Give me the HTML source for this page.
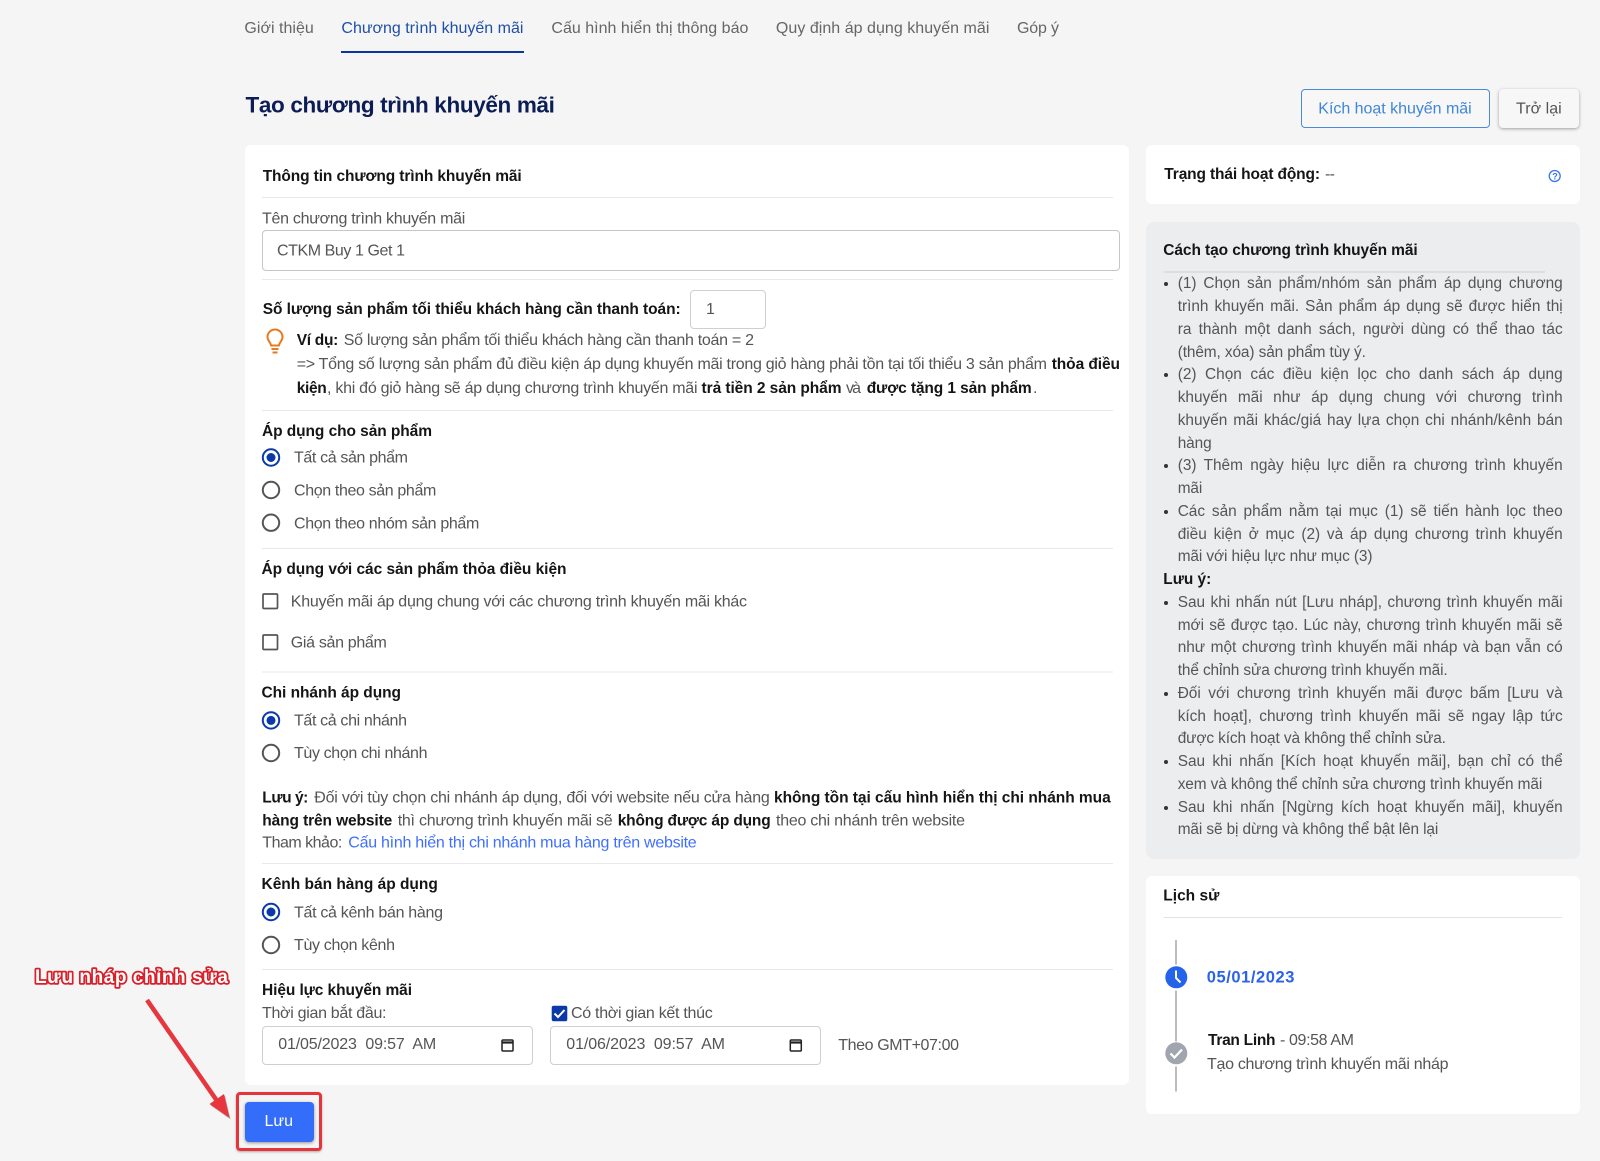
<!DOCTYPE html>
<html lang="vi"><head><meta charset="utf-8"><title>Tạo chương trình khuyến mãi</title>
<style>
html,body{margin:0;padding:0;width:1600px;height:1161px;overflow:hidden;background:#f5f5f5;font-family:"Liberation Sans",Arial,sans-serif}
.box{position:absolute;box-sizing:border-box}
.card{background:#fff;border-radius:6px}
svg{position:absolute;left:0;top:0}
text{font-family:"Liberation Sans",Arial,sans-serif;font-size:16px;fill:#555;white-space:pre}
.b{font-weight:bold;fill:#151515;font-size:15.5px}
.g{fill:#666}
#list{position:absolute;left:1177.7px;top:273.4px;width:385px;font-size:15.4px;line-height:22.75px;color:#555}
#list div{height:22.75px;text-align:justify;text-align-last:justify;position:relative;overflow:visible}
#list .p::before{content:"";position:absolute;left:-13.5px;top:9px;width:4px;height:4px;border-radius:50%;background:#333}
#list .h{margin-left:-14.4px;font-weight:bold;color:#151515;text-align-last:left}
#list .n{text-align:left;text-align-last:left;white-space:nowrap;letter-spacing:-.1px}
</style></head><body>
<div class="box card" style="left:244.5px;top:145px;width:884px;height:940px"></div>
<div class="box card" style="left:1146px;top:145px;width:434px;height:59px"></div>
<div class="box" style="left:1146px;top:222px;width:434px;height:637px;background:#ecedef;border-radius:8px"></div>
<div class="box card" style="left:1146px;top:876px;width:434px;height:238px"></div>
<div class="box" style="left:1300.5px;top:88.5px;width:189.5px;height:39.5px;border:1px solid #4a8ad8;border-radius:4px;background:#f7f7f7"></div>
<div class="box" style="left:1499px;top:89px;width:80px;height:39px;border-radius:4px;background:#f7f7f7;box-shadow:0 1px 3px rgba(0,0,0,.35)"></div>
<div class="box" style="left:262px;top:230px;width:858px;height:40.5px;border:1px solid #c6c6c6;border-radius:4px"></div>
<div class="box" style="left:690px;top:289.5px;width:75.5px;height:39px;border:1px solid #cfcfcf;border-radius:4px"></div>
<div class="box" style="left:262px;top:1025.5px;width:271px;height:39px;border:1px solid #cfcfcf;border-radius:4px"></div>
<div class="box" style="left:550px;top:1025.5px;width:271px;height:39px;border:1px solid #cfcfcf;border-radius:4px"></div>
<div class="box" style="left:245px;top:1102px;width:69px;height:40px;background:#356dfb;border-radius:4px;box-shadow:0 1px 3px rgba(0,0,0,.4)"></div>
<div class="box" style="left:235.5px;top:1091.500px;width:86.500px;height:59.500px;border:3px solid #e5343c;border-radius:4px;box-shadow:0 1px 2px rgba(0,0,0,.3)"></div>

<svg width="1600" height="1161" viewBox="0 0 1600 1161" xmlns="http://www.w3.org/2000/svg">
<!-- tabs -->
<text class="g" x="244.4" y="33" textLength="69.4">Giới thiệu</text>
<text x="341.4" y="33" textLength="182" style="fill:#1f4fa8">Chương trình khuyến mãi</text>
<text class="g" x="551.4" y="33" textLength="197">Cấu hình hiển thị thông báo</text>
<text class="g" x="775.9" y="33" textLength="213.5">Quy định áp dụng khuyến mãi</text>
<text class="g" x="1017" y="33" textLength="42">Góp ý</text>
<rect x="341" y="51" width="183" height="2" fill="#0b36a0"/>
<text x="245.5" y="112.3" textLength="309.4" style="font-size:22.500px;font-weight:bold;fill:#0c1c54">Tạo chương trình khuyến mãi</text>
<!-- buttons -->
<text x="1318.3" y="113.5" textLength="153.4" style="fill:#3f86d8">Kích hoạt khuyến mãi</text>
<text x="1516" y="113.5" textLength="45.7">Trở lại</text>
<!-- left card -->
<text class="b" x="262.7" y="181" textLength="259">Thông tin chương trình khuyến mãi</text>
<rect x="262" y="197" width="851" height="1" fill="#e8e8e8"/>
<text x="262" y="223.3" textLength="203.3">Tên chương trình khuyến mãi</text>
<text x="277" y="255.3" textLength="128">CTKM Buy 1 Get 1</text>
<rect x="262" y="279" width="851" height="1" fill="#e8e8e8"/>
<text class="b" x="262.7" y="314" textLength="418">Số lượng sản phẩm tối thiểu khách hàng cần thanh toán:</text>
<text x="706" y="314">1</text>
<path d="M271.5 349h7M272.5 352.5h5M271 345.5c0-3-3.5-4.5-3.5-8.5a7.5 7.5 0 0 1 15 0c0 4-3.5 5.500-3.500 8.500z" fill="none" stroke="#e8791e" stroke-width="2" stroke-linejoin="round"/>
<text class="b" x="296.7" y="345" textLength="41.6">Ví dụ:</text>
<text x="343.7" y="345" textLength="410.3">Số lượng sản phẩm tối thiểu khách hàng cần thanh toán = 2</text>
<text x="296.7" y="368.800" textLength="750.300">=&gt; Tổng số lượng sản phẩm đủ điều kiện áp dụng khuyến mãi trong giỏ hàng phải tồn tại tối thiểu 3 sản phẩm</text>
<text class="b" x="1051.7" y="368.800" textLength="68.300">thỏa điều</text>
<text class="b" x="296.7" y="393" textLength="30">kiện</text>
<text x="327" y="393" textLength="370.500">, khi đó giỏ hàng sẽ áp dụng chương trình khuyến mãi</text>
<text class="b" x="701.500" y="393" textLength="140">trả tiền 2 sản phẩm</text>
<text x="846" y="393" textLength="15">và</text>
<text class="b" x="866.700" y="393" textLength="165">được tặng 1 sản phẩm</text>
<text x="1033" y="393">.</text>
<rect x="262" y="410" width="851" height="1" fill="#e8e8e8"/>
<text class="b" x="262" y="436" textLength="170">Áp dụng cho sản phẩm</text>
<text x="294" y="462.700" textLength="114">Tất cả sản phẩm</text>
<text x="294" y="495.300" textLength="142.300">Chọn theo sản phẩm</text>
<text x="294" y="528.300" textLength="185.300">Chọn theo nhóm sản phẩm</text>
<circle cx="271" cy="457.500" r="8.200" fill="none" stroke="#0b3aa8" stroke-width="2"/><circle cx="271" cy="457.500" r="4.500" fill="#0b3aa8"/>
<circle cx="271" cy="490" r="8.200" fill="none" stroke="#555" stroke-width="2"/>
<circle cx="271" cy="522.700" r="8.200" fill="none" stroke="#555" stroke-width="2"/>
<rect x="262" y="548" width="851" height="1" fill="#e8e8e8"/>
<text class="b" x="261.500" y="574" textLength="305">Áp dụng với các sản phẩm thỏa điều kiện</text>
<rect x="263" y="594" width="14.500" height="14.500" rx="1" fill="none" stroke="#555" stroke-width="1.700"/>
<text x="290.800" y="606.500" textLength="456.200">Khuyến mãi áp dụng chung với các chương trình khuyến mãi khác</text>
<rect x="263" y="635" width="14.500" height="14.500" rx="1" fill="none" stroke="#555" stroke-width="1.700"/>
<text x="290.800" y="647.500" textLength="96">Giá sản phẩm</text>
<rect x="262" y="671.500" width="851" height="1" fill="#e8e8e8"/>
<text class="b" x="261.500" y="697.500" textLength="139.500">Chi nhánh áp dụng</text>
<circle cx="271" cy="720.400" r="8.200" fill="none" stroke="#0b3aa8" stroke-width="2"/><circle cx="271" cy="720.400" r="4.500" fill="#0b3aa8"/>
<text x="294" y="725.300" textLength="113">Tất cả chi nhánh</text>
<circle cx="271" cy="753" r="8.200" fill="none" stroke="#555" stroke-width="2"/>
<text x="294" y="757.800" textLength="133.500">Tùy chọn chi nhánh</text>
<text class="b" x="262.300" y="802.700" textLength="46">Lưu ý:</text>
<text x="314.300" y="802.700" textLength="455.500">Đối với tùy chọn chi nhánh áp dụng, đối với website nếu cửa hàng</text>
<text class="b" x="774" y="802.700" textLength="336.700">không tồn tại cấu hình hiển thị chi nhánh mua</text>
<text class="b" x="262.300" y="825.700" textLength="130">hàng trên website</text>
<text x="397.700" y="825.700" textLength="215">thì chương trình khuyến mãi sẽ</text>
<text class="b" x="617.700" y="825.700" textLength="153">không được áp dụng</text>
<text x="776" y="825.700" textLength="189">theo chi nhánh trên website</text>
<text x="262.300" y="847.700" textLength="80">Tham khảo:</text>
<text x="348.300" y="847.700" textLength="348.400" style="fill:#3f6fff">Cấu hình hiển thị chi nhánh mua hàng trên website</text>
<rect x="262" y="863" width="851" height="1" fill="#e8e8e8"/>
<text class="b" x="261.500" y="889.200" textLength="176.300">Kênh bán hàng áp dụng</text>
<circle cx="271" cy="912" r="8.200" fill="none" stroke="#0b3aa8" stroke-width="2"/><circle cx="271" cy="912" r="4.500" fill="#0b3aa8"/>
<text x="294" y="917.500" textLength="149">Tất cả kênh bán hàng</text>
<circle cx="271" cy="945" r="8.200" fill="none" stroke="#555" stroke-width="2"/>
<text x="294" y="950" textLength="101">Tùy chọn kênh</text>
<rect x="262" y="969" width="851" height="1" fill="#e8e8e8"/>
<text class="b" x="262" y="995" textLength="150">Hiệu lực khuyến mãi</text>
<text x="262" y="1018" textLength="124.500">Thời gian bắt đầu:</text>
<rect x="551.700" y="1005.700" width="15.600" height="15.600" rx="2" fill="#0b3aa8"/>
<path d="M554.500 1013.500l3.500 3.500 6.500-7" fill="none" stroke="#fff" stroke-width="2"/>
<text x="571" y="1018" textLength="141.700">Có thời gian kết thúc</text>
<text x="278.200" y="1049" textLength="158">01/05/2023  09:57  AM</text>
<text x="566.300" y="1049" textLength="158.700">01/06/2023  09:57  AM</text>
<g fill="none" stroke="#222" stroke-width="1.500"><rect x="502" y="1040" width="11" height="11" rx="1"/><path d="M502 1042.500h11" stroke-width="2.200"/><rect x="790.300" y="1040" width="11" height="11" rx="1"/><path d="M790.300 1042.500h11" stroke-width="2.200"/></g>
<text x="838.300" y="1050" textLength="120.700">Theo GMT+07:00</text>
<text x="264.500" y="1126" textLength="28.500" style="fill:#fff">Lưu</text>
<!-- right column -->
<text class="b" x="1164.300" y="179" textLength="155.700">Trạng thái hoạt động:</text>
<text x="1325" y="179" textLength="10">--</text>
<circle cx="1554.700" cy="176" r="5.500" fill="none" stroke="#3b74f0" stroke-width="1.300"/>
<text x="1552.300" y="179.500" style="font-size:9px;font-weight:bold;fill:#3b74f0">?</text>
<text class="b" x="1163.300" y="255" textLength="254.400">Cách tạo chương trình khuyến mãi</text>
<rect x="1163.500" y="271.500" width="381.500" height="1" fill="#cfd0d3"/>
<!-- history -->
<text class="b" x="1163.300" y="900.500" textLength="56">Lịch sử</text>
<rect x="1163.700" y="917" width="398.600" height="1" fill="#e3e3e3"/>
<path d="M1176 940v24.500M1176 990.500v51M1176 1066.500v25" stroke="#bdbdbd" stroke-width="2" fill="none"/>
<circle cx="1176.300" cy="977.300" r="11" fill="#2563eb"/>
<path d="M1176 970.500v7.500l4.500 4.500" fill="none" stroke="#fff" stroke-width="2"/>
<circle cx="1176.300" cy="1053.300" r="11" fill="#a0a5af"/>
<path d="M1170.500 1053.500l4 4 7.500-8" fill="none" stroke="#fff" stroke-width="2.200"/>
<text x="1206.700" y="982.500" textLength="87.700" style="font-size:16.500px;font-weight:bold;fill:#2a62ea">05/01/2023</text>
<text class="b" x="1208" y="1045" textLength="67.500">Tran Linh</text>
<text x="1280" y="1045" textLength="74">- 09:58 AM</text>
<text x="1207" y="1069" textLength="241.500">Tạo chương trình khuyến mãi nháp</text>
<!-- annotation -->
<text x="35" y="983" textLength="193" style="font-size:19px;font-weight:bold;fill:#fff;stroke:#d9202a;stroke-width:3.500px;paint-order:stroke;stroke-linejoin:round">Lưu nháp chỉnh sửa</text>
<g transform="translate(1 1.500)" opacity=".25"><path d="M147 1000L222 1108" stroke="#000" stroke-width="4.500" fill="none"/><path d="M229.600 1118L209.500 1104L224 1094z" fill="#000"/></g>
<path d="M147 1000L222 1108" stroke="#e8363f" stroke-width="4.500" fill="none"/>
<path d="M229.600 1118L209.500 1104L224 1094z" fill="#e8363f"/>
</svg>

<div id="list">
<div class="p">(1) Chọn sản phẩm/nhóm sản phẩm áp dụng chương</div>
<div>trình khuyến mãi. Sản phẩm áp dụng sẽ được hiển thị</div>
<div>ra thành một danh sách, người dùng có thể thao tác</div>
<div class="n">(thêm, xóa) sản phẩm tùy ý.</div>
<div class="p">(2) Chọn các điều kiện lọc cho danh sách áp dụng</div>
<div>khuyến mãi như áp dụng chung với chương trình</div>
<div>khuyến mãi khác/giá hay lựa chọn chi nhánh/kênh bán</div>
<div class="n">hàng</div>
<div class="p">(3) Thêm ngày hiệu lực diễn ra chương trình khuyến</div>
<div class="n">mãi</div>
<div class="p">Các sản phẩm nằm tại mục (1) sẽ tiến hành lọc theo</div>
<div>điều kiện ở mục (2) và áp dụng chương trình khuyến</div>
<div class="n">mãi với hiệu lực như mục (3)</div>
<div class="h">Lưu ý:</div>
<div class="p">Sau khi nhấn nút [Lưu nháp], chương trình khuyến mãi</div>
<div>mới sẽ được tạo. Lúc này, chương trình khuyến mãi sẽ</div>
<div>như một chương trình khuyến mãi nháp và bạn vẫn có</div>
<div class="n">thể chỉnh sửa chương trình khuyến mãi.</div>
<div class="p">Đối với chương trình khuyến mãi được bấm [Lưu và</div>
<div>kích hoạt], chương trình khuyến mãi sẽ ngay lập tức</div>
<div class="n">được kích hoạt và không thể chỉnh sửa.</div>
<div class="p">Sau khi nhấn [Kích hoạt khuyến mãi], bạn chỉ có thể</div>
<div class="n">xem và không thể chỉnh sửa chương trình khuyến mãi</div>
<div class="p">Sau khi nhấn [Ngừng kích hoạt khuyến mãi], khuyến</div>
<div class="n">mãi sẽ bị dừng và không thể bật lên lại</div>
</div>
</body></html>
